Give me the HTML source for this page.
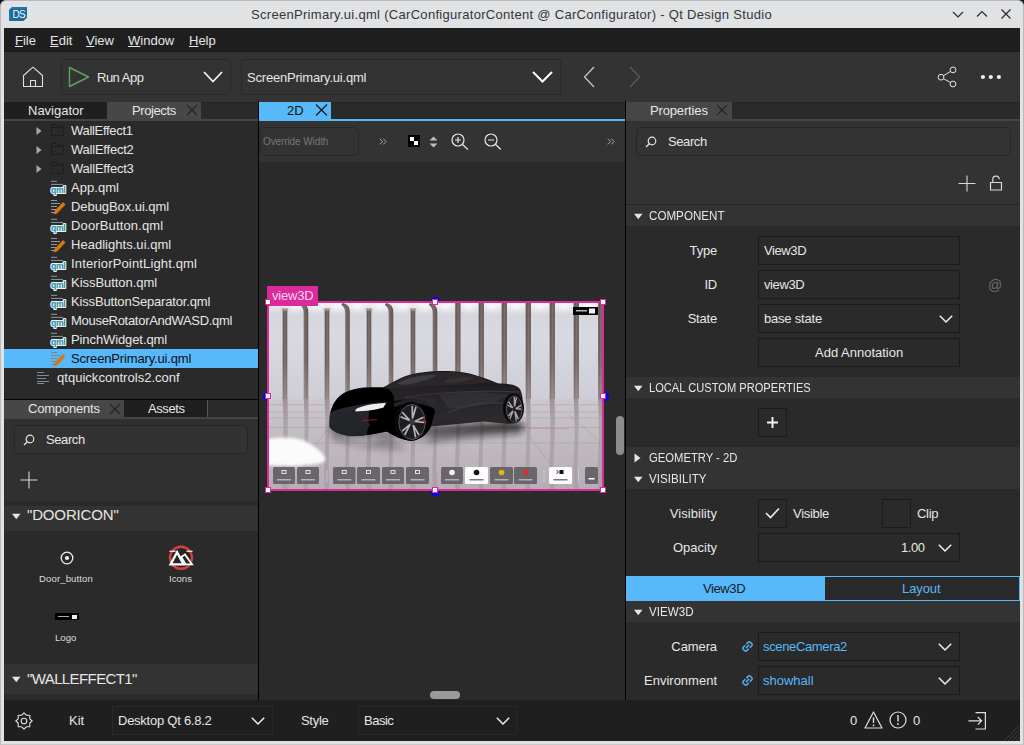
<!DOCTYPE html>
<html><head><meta charset="utf-8">
<style>
*{margin:0;padding:0;box-sizing:border-box}
html,body{width:1024px;height:745px;overflow:hidden;background:#151515}
body{position:relative;font-family:"Liberation Sans",sans-serif;font-size:13px;color:#e6e6e6}
.a{position:absolute}
.t{position:absolute;white-space:nowrap;line-height:16px;font-size:13px}
svg{position:absolute;overflow:visible}
</style></head><body>
<!-- window frame -->
<div class="a" style="left:0;top:0;width:1024px;height:745px;background:#e1e2e4;border-radius:6px 6px 0 0;border:1px solid #b9babc;border-bottom-color:#c8c9cb"></div>
<!-- DS logo -->
<svg style="left:9px;top:7px" width="18" height="14" viewBox="0 0 18 14"><path d="M3 0 H18 V10.5 L14.5 14 H0 V3 Z" fill="#1b6a9b"/><path d="M0 3 L3 0 H18 V2 H4 L2 4 V14 H0 Z" fill="#2a7db0" opacity="0.6"/><text x="3.4" y="10.6" font-family="Liberation Sans" font-size="10" fill="#f4f8fb" letter-spacing="-0.5">DS</text></svg>
<div class="t" style="left:251px;top:7px;color:#31363b;letter-spacing:0.3px">ScreenPrimary.ui.qml (CarConfiguratorContent @ CarConfigurator) - Qt Design Studio</div>
<!-- window buttons -->
<svg style="left:952px;top:11px" width="12" height="8"><path d="M1 1 L6 6 L11 1" stroke="#2a2a2a" stroke-width="1.2" fill="none"/></svg>
<svg style="left:976px;top:10px" width="12" height="8"><path d="M1 6.5 L6 1.5 L11 6.5" stroke="#2a2a2a" stroke-width="1.2" fill="none"/></svg>
<svg style="left:1001px;top:9px" width="10" height="10"><path d="M0.5 0.5 L9.5 9.5 M9.5 0.5 L0.5 9.5" stroke="#2a2a2a" stroke-width="1.2" fill="none"/></svg>

<!-- menubar -->
<div class="a" style="left:4px;top:28px;width:1016px;height:24px;background:#1f1f1f"></div>
<div class="t" style="left:15px;top:32.5px"><u>F</u>ile</div>
<div class="t" style="left:50px;top:32.5px"><u>E</u>dit</div>
<div class="t" style="left:86px;top:32.5px"><u>V</u>iew</div>
<div class="t" style="left:128px;top:32.5px"><u>W</u>indow</div>
<div class="t" style="left:189px;top:32.5px"><u>H</u>elp</div>

<!-- toolbar -->
<div class="a" style="left:4px;top:52px;width:1016px;height:50px;background:#333333"></div><div class="a" style="left:4px;top:51px;width:1016px;height:1px;background:#1a1a1a"></div>

<!-- toolbar items -->
<svg style="left:22px;top:66px" width="22" height="22" viewBox="0 0 22 22"><path d="M1.5 9.5 L11 1.2 L20.5 9.5 V20.5 H1.5 Z M8.5 20.5 V14.5 H13.5 V20.5" stroke="#e0e0e0" stroke-width="1.1" fill="none" stroke-linejoin="round"/></svg>
<div class="a" style="left:61px;top:59px;width:170px;height:36px;background:#333333;border:1px solid #292929;border-radius:5px"></div>
<svg style="left:68px;top:66px" width="22" height="22" viewBox="0 0 22 22"><path d="M1.5 1.5 L20.5 11 L1.5 20.5 Z" stroke="#5ea55a" stroke-width="1.4" fill="none" stroke-linejoin="round"/></svg>
<div class="t" style="left:97px;top:69.5px;letter-spacing:-0.5px">Run App</div>
<svg style="left:203px;top:71px" width="20" height="12" viewBox="0 0 20 12"><path d="M1 1 L10 10.5 L19 1" stroke="#f2f2f2" stroke-width="1.8" fill="none"/></svg>
<div class="a" style="left:241px;top:59px;width:320px;height:36px;background:#333333;border:1px solid #292929;border-radius:2px"></div>
<div class="t" style="left:247px;top:69.5px;letter-spacing:-0.2px">ScreenPrimary.ui.qml</div>
<svg style="left:532px;top:71px" width="21" height="12" viewBox="0 0 21 12"><path d="M1 1 L10.5 10.5 L20 1" stroke="#ffffff" stroke-width="2" fill="none"/></svg>
<svg style="left:583px;top:66px" width="12" height="22" viewBox="0 0 12 22"><path d="M11 1 L1.5 11 L11 21" stroke="#c8c8c8" stroke-width="1.3" fill="none"/></svg>
<svg style="left:629px;top:66px" width="12" height="22" viewBox="0 0 12 22"><path d="M1 1 L10.5 11 L1 21" stroke="#5a5a5a" stroke-width="1.3" fill="none"/></svg>
<svg style="left:936px;top:65px" width="22" height="24" viewBox="0 0 22 24"><circle cx="5" cy="12.2" r="2.9" stroke="#e6e6e6" stroke-width="1" fill="none"/><circle cx="17" cy="4.9" r="2.9" stroke="#e6e6e6" stroke-width="1" fill="none"/><circle cx="17" cy="19" r="2.9" stroke="#e6e6e6" stroke-width="1" fill="none"/><path d="M7.6 10.6 L14.4 6.5 M7.6 13.8 L14.4 17.4" stroke="#e6e6e6" stroke-width="1"/></svg>
<svg style="left:978px;top:72px" width="26" height="10" viewBox="0 0 26 10"><circle cx="4.9" cy="5" r="2.1" fill="#f0f0f0"/><circle cx="12.8" cy="5" r="2.1" fill="#f0f0f0"/><circle cx="20.9" cy="5" r="2.1" fill="#f0f0f0"/></svg>

<!-- left panel -->
<div class="a" style="left:4px;top:102px;width:254px;height:19px;background:#2a2a2a;border-top:1px solid #242424"></div><div class="a" style="left:4px;top:102px;width:103px;height:17px;background:#1f1f1f"></div>
<div class="a" style="left:4px;top:121px;width:254px;height:278px;background:#2a2a2a"></div>
<div class="a" style="left:4px;top:399px;width:254px;height:1px;background:#050505"></div>
<div class="a" style="left:4px;top:400px;width:254px;height:19px;background:#1f1f1f"></div>
<div class="a" style="left:4px;top:419px;width:254px;height:281px;background:#303030"></div>


<!-- left tabs -->
<div class="t" style="left:28px;top:102.5px;letter-spacing:0px">Navigator</div>
<div class="a" style="left:107px;top:102px;width:94px;height:17px;background:#474747"></div>
<div class="t" style="left:132px;top:102.5px;letter-spacing:-0.4px">Projects</div>
<svg style="left:186px;top:104px" width="12" height="12" viewBox="0 0 12 12"><path d="M1 1 L11 11 M11 1 L1 11" stroke="#252525" stroke-width="1.2"/></svg>
<div class="a" style="left:4px;top:119px;width:254px;height:2px;background:#454545"></div>
<div class="t" style="left:71px;top:122.5px;color:#e6e6e6;letter-spacing:-0.3px">WallEffect1</div>
<svg style="left:36px;top:127px" width="6" height="8" viewBox="0 0 6 8"><path d="M0.5 0 L5.5 4 L0.5 8 Z" fill="#a8a8a8"/></svg>
<svg style="left:51px;top:124px" width="13" height="12" viewBox="0 0 13 12"><path d="M0.5 0.5 H5 L6 2 H12.5 V11.5 H0.5 Z M0.5 3.5 H12.5" stroke="#1c1f22" stroke-width="1" fill="none"/></svg>
<div class="t" style="left:71px;top:141.5px;color:#e6e6e6;letter-spacing:-0.22px">WallEffect2</div>
<svg style="left:36px;top:146px" width="6" height="8" viewBox="0 0 6 8"><path d="M0.5 0 L5.5 4 L0.5 8 Z" fill="#a8a8a8"/></svg>
<svg style="left:51px;top:143px" width="13" height="12" viewBox="0 0 13 12"><path d="M0.5 0.5 H5 L6 2 H12.5 V11.5 H0.5 Z M0.5 3.5 H12.5" stroke="#1c1f22" stroke-width="1" fill="none"/></svg>
<div class="t" style="left:71px;top:160.5px;color:#e6e6e6;letter-spacing:-0.22px">WallEffect3</div>
<svg style="left:36px;top:165px" width="6" height="8" viewBox="0 0 6 8"><path d="M0.5 0 L5.5 4 L0.5 8 Z" fill="#a8a8a8"/></svg>
<svg style="left:51px;top:162px" width="13" height="12" viewBox="0 0 13 12"><path d="M0.5 0.5 H5 L6 2 H12.5 V11.5 H0.5 Z M0.5 3.5 H12.5" stroke="#1c1f22" stroke-width="1" fill="none"/></svg>
<div class="t" style="left:71px;top:179.5px;color:#e6e6e6;letter-spacing:0.04px">App.qml</div>
<svg style="left:51px;top:180px" width="15" height="16" viewBox="0 0 15 16"><path d="M0 1.3 H6 M0 4.4 H12 M0 7.4 H6" stroke="#8d9aa6" stroke-width="1"/><text x="7.2" y="13.2" font-size="8.5" font-weight="bold" text-anchor="middle" fill="#1a8aa8" stroke="#eef3f6" stroke-width="2.2" paint-order="stroke" stroke-linejoin="round" font-family="Liberation Sans" letter-spacing="-0.3">qml</text></svg>
<div class="t" style="left:71px;top:198.5px;color:#e6e6e6;letter-spacing:-0.06px">DebugBox.ui.qml</div>
<svg style="left:51px;top:199px" width="15" height="16" viewBox="0 0 15 16"><path d="M0 1.5 H6 M0 4.5 H9 M0 7.5 H6 M0 10.5 H8 M0 13.5 H6" stroke="#8d9aa6" stroke-width="1"/><path d="M2.5 15.5 L3.5 12 L12 3 L14.5 5.5 L6 14.5 Z" fill="#d9770f"/></svg>
<div class="t" style="left:71px;top:217.5px;color:#e6e6e6;letter-spacing:0.14px">DoorButton.qml</div>
<svg style="left:51px;top:218px" width="15" height="16" viewBox="0 0 15 16"><path d="M0 1.3 H6 M0 4.4 H12 M0 7.4 H6" stroke="#8d9aa6" stroke-width="1"/><text x="7.2" y="13.2" font-size="8.5" font-weight="bold" text-anchor="middle" fill="#1a8aa8" stroke="#eef3f6" stroke-width="2.2" paint-order="stroke" stroke-linejoin="round" font-family="Liberation Sans" letter-spacing="-0.3">qml</text></svg>
<div class="t" style="left:71px;top:236.5px;color:#e6e6e6;letter-spacing:0.03px">Headlights.ui.qml</div>
<svg style="left:51px;top:237px" width="15" height="16" viewBox="0 0 15 16"><path d="M0 1.5 H6 M0 4.5 H9 M0 7.5 H6 M0 10.5 H8 M0 13.5 H6" stroke="#8d9aa6" stroke-width="1"/><path d="M2.5 15.5 L3.5 12 L12 3 L14.5 5.5 L6 14.5 Z" fill="#d9770f"/></svg>
<div class="t" style="left:71px;top:255.5px;color:#e6e6e6;letter-spacing:0.15px">InteriorPointLight.qml</div>
<svg style="left:51px;top:256px" width="15" height="16" viewBox="0 0 15 16"><path d="M0 1.3 H6 M0 4.4 H12 M0 7.4 H6" stroke="#8d9aa6" stroke-width="1"/><text x="7.2" y="13.2" font-size="8.5" font-weight="bold" text-anchor="middle" fill="#1a8aa8" stroke="#eef3f6" stroke-width="2.2" paint-order="stroke" stroke-linejoin="round" font-family="Liberation Sans" letter-spacing="-0.3">qml</text></svg>
<div class="t" style="left:71px;top:274.5px;color:#e6e6e6;letter-spacing:-0.04px">KissButton.qml</div>
<svg style="left:51px;top:275px" width="15" height="16" viewBox="0 0 15 16"><path d="M0 1.3 H6 M0 4.4 H12 M0 7.4 H6" stroke="#8d9aa6" stroke-width="1"/><text x="7.2" y="13.2" font-size="8.5" font-weight="bold" text-anchor="middle" fill="#1a8aa8" stroke="#eef3f6" stroke-width="2.2" paint-order="stroke" stroke-linejoin="round" font-family="Liberation Sans" letter-spacing="-0.3">qml</text></svg>
<div class="t" style="left:71px;top:293.5px;color:#e6e6e6;letter-spacing:-0.17px">KissButtonSeparator.qml</div>
<svg style="left:51px;top:294px" width="15" height="16" viewBox="0 0 15 16"><path d="M0 1.3 H6 M0 4.4 H12 M0 7.4 H6" stroke="#8d9aa6" stroke-width="1"/><text x="7.2" y="13.2" font-size="8.5" font-weight="bold" text-anchor="middle" fill="#1a8aa8" stroke="#eef3f6" stroke-width="2.2" paint-order="stroke" stroke-linejoin="round" font-family="Liberation Sans" letter-spacing="-0.3">qml</text></svg>
<div class="t" style="left:71px;top:312.5px;color:#e6e6e6;letter-spacing:-0.29px">MouseRotatorAndWASD.qml</div>
<svg style="left:51px;top:313px" width="15" height="16" viewBox="0 0 15 16"><path d="M0 1.3 H6 M0 4.4 H12 M0 7.4 H6" stroke="#8d9aa6" stroke-width="1"/><text x="7.2" y="13.2" font-size="8.5" font-weight="bold" text-anchor="middle" fill="#1a8aa8" stroke="#eef3f6" stroke-width="2.2" paint-order="stroke" stroke-linejoin="round" font-family="Liberation Sans" letter-spacing="-0.3">qml</text></svg>
<div class="t" style="left:71px;top:331.5px;color:#e6e6e6;letter-spacing:-0.1px">PinchWidget.qml</div>
<svg style="left:51px;top:332px" width="15" height="16" viewBox="0 0 15 16"><path d="M0 1.3 H6 M0 4.4 H12 M0 7.4 H6" stroke="#8d9aa6" stroke-width="1"/><text x="7.2" y="13.2" font-size="8.5" font-weight="bold" text-anchor="middle" fill="#1a8aa8" stroke="#eef3f6" stroke-width="2.2" paint-order="stroke" stroke-linejoin="round" font-family="Liberation Sans" letter-spacing="-0.3">qml</text></svg>
<div class="a" style="left:4px;top:349px;width:254px;height:19px;background:#57b8fa"></div>
<div class="t" style="left:71px;top:350.5px;color:#0f0f0f;letter-spacing:-0.15px">ScreenPrimary.ui.qml</div>
<svg style="left:51px;top:351px" width="15" height="16" viewBox="0 0 15 16"><path d="M0 1.5 H6 M0 4.5 H9 M0 7.5 H6 M0 10.5 H8 M0 13.5 H6" stroke="#7c8893" stroke-width="1"/><path d="M2.5 15.5 L3.5 12 L12 3 L14.5 5.5 L6 14.5 Z" fill="#d9770f"/></svg>
<div class="t" style="left:57px;top:369.5px;color:#e6e6e6;letter-spacing:0.03px">qtquickcontrols2.conf</div>
<svg style="left:37px;top:371px" width="13" height="13" viewBox="0 0 13 13"><path d="M0 1.5 H7 M0 4.5 H12 M0 7.5 H9 M0 10.5 H12 M0 12.5 H7" stroke="#7f8a94" stroke-width="1"/></svg>

<!-- components panel -->
<div class="a" style="left:4px;top:400px;width:120px;height:17px;background:#474747"></div>
<div class="t" style="left:28px;top:401px;letter-spacing:-0.2px">Components</div>
<svg style="left:109px;top:403px" width="12" height="12" viewBox="0 0 12 12"><path d="M1 1 L11 11 M11 1 L1 11" stroke="#252525" stroke-width="1.2"/></svg>
<div class="t" style="left:148px;top:401px;letter-spacing:-0.4px">Assets</div>
<div class="a" style="left:207px;top:400px;width:1px;height:17px;background:#555"></div>
<div class="a" style="left:208px;top:400px;width:50px;height:17px;background:#2a2a2a"></div>
<div class="a" style="left:4px;top:417px;width:254px;height:2px;background:#454545"></div>
<div class="a" style="left:14px;top:425px;width:234px;height:29px;background:#323232;border:1px solid #262626;border-radius:5px"></div>
<svg style="left:23px;top:434px" width="12" height="12" viewBox="0 0 12 12"><circle cx="7" cy="5" r="3.8" stroke="#e6e6e6" stroke-width="1.2" fill="none"/><path d="M4.3 7.7 L1 11" stroke="#e6e6e6" stroke-width="1.3"/></svg>
<div class="t" style="left:46px;top:431.5px;letter-spacing:-0.4px">Search</div>
<svg style="left:20px;top:471px" width="18" height="18" viewBox="0 0 18 18"><path d="M9 0.5 V17.5 M0.5 9 H17.5" stroke="#d8d8d8" stroke-width="1.1"/></svg>
<div class="a" style="left:4px;top:501px;width:254px;height:5px;background:#2a2a2a"></div>
<div class="a" style="left:4px;top:506px;width:254px;height:25px;background:#333333"></div>
<svg style="left:11px;top:513px" width="10" height="7" viewBox="0 0 10 7"><path d="M1 0.8 H9.5 L5.25 6.2 Z" fill="#e6e6e6"/></svg>
<div class="t" style="left:27px;top:506px;font-size:15px;line-height:18px;letter-spacing:-0.15px">"DOORICON"</div>
<div class="a" style="left:4px;top:531px;width:254px;height:133px;background:#2a2a2a"></div>
<svg style="left:60px;top:551px" width="14" height="14" viewBox="0 0 14 14"><circle cx="7" cy="7" r="5.8" stroke="#f0f0f0" stroke-width="1.3" fill="none"/><circle cx="7" cy="7" r="2.1" fill="#f0f0f0"/></svg>
<div class="t" style="left:39px;top:573px;font-size:9.6px;line-height:12px;color:#dcdcdc;letter-spacing:0.1px">Door_button</div>
<svg style="left:168px;top:545px" width="26" height="26" viewBox="0 0 26 26"><circle cx="13" cy="12.8" r="12.2" fill="#d6403f"/><circle cx="13" cy="12.8" r="9.8" fill="#262626"/><rect x="1.5" y="5.6" width="6" height="1.4" fill="#f6dada"/><rect x="18.5" y="5.6" width="6" height="1.4" fill="#f6dada"/><path d="M2.6 19.4 L9.1 7.2 L15.6 19.4 Z" stroke="#fff" stroke-width="2.3" fill="none" stroke-linejoin="miter"/><path d="M13.2 12 L17 9.5 L24 19.4 L17.8 19.4 Z" stroke="#fff" stroke-width="1.8" fill="none"/></svg>
<div class="t" style="left:169px;top:573px;font-size:9.6px;line-height:12px;color:#dcdcdc">Icons</div>
<div class="a" style="left:55px;top:613px;width:24px;height:7px;background:#000"></div>
<div class="a" style="left:58px;top:615.5px;width:11px;height:1.5px;background:#aaa"></div>
<div class="a" style="left:72px;top:614.5px;width:5px;height:4px;background:#eee"></div>
<div class="t" style="left:55px;top:631.5px;font-size:9.6px;line-height:12px;color:#dcdcdc">Logo</div>
<div class="a" style="left:4px;top:664px;width:254px;height:30px;background:#333333"></div>
<svg style="left:11px;top:676px" width="10" height="7" viewBox="0 0 10 7"><path d="M1 0.8 H9.5 L5.25 6.2 Z" fill="#e6e6e6"/></svg>
<div class="t" style="left:27px;top:670px;font-size:15px;line-height:18px;letter-spacing:-0.6px">"WALLEFFECT1"</div>

<!-- center -->
<div class="a" style="left:258px;top:101px;width:1px;height:599px;background:#000"></div>
<div class="a" style="left:259px;top:102px;width:366px;height:19px;background:#2a2a2a;border-top:1px solid #242424"></div>
<div class="a" style="left:259px;top:121px;width:366px;height:41px;background:#333333"></div>
<div class="a" style="left:259px;top:162px;width:366px;height:538px;background:#2a2a2a"></div>


<!-- center tabs -->
<div class="a" style="left:259px;top:102px;width:72px;height:17px;background:#57b8fa"></div>
<div class="a" style="left:259px;top:119px;width:366px;height:2px;background:#57b8fa"></div>
<div class="t" style="left:287px;top:102.5px;color:#111">2D</div>
<svg style="left:315px;top:104px" width="13" height="12" viewBox="0 0 13 12"><path d="M1 0.5 L12 11.5 M12 0.5 L1 11.5" stroke="#1a1a1a" stroke-width="1.2"/></svg>
<!-- canvas toolbar -->
<div class="a" style="left:260px;top:127px;width:99px;height:29px;background:#333333;border:1px solid #282828;border-radius:5px"></div>
<div class="t" style="left:263px;top:135px;font-size:10px;line-height:14px;color:#767676;letter-spacing:-0.1px">Override Width</div>
<svg style="left:379px;top:138px" width="8" height="7" viewBox="0 0 8 7"><path d="M0.8 0.6 L3.5 3.5 L0.8 6.4 M4.3 0.6 L7 3.5 L4.3 6.4" stroke="#b0b0b0" stroke-width="0.9" fill="none"/></svg>
<div class="a" style="left:408px;top:135px;width:12px;height:12px;background:#000"></div>
<div class="a" style="left:410px;top:137px;width:4px;height:4px;background:#fff"></div>
<div class="a" style="left:414px;top:141px;width:4px;height:4px;background:#fff"></div>
<svg style="left:429px;top:136px" width="9" height="12" viewBox="0 0 9 12"><path d="M0.5 4.5 L4.5 0.5 L8.5 4.5 Z M0.5 7.5 L4.5 11.5 L8.5 7.5 Z" fill="#bdbdbd"/></svg>
<svg style="left:451px;top:133px" width="18" height="17" viewBox="0 0 18 17"><circle cx="7" cy="7" r="6" stroke="#e8e8e8" stroke-width="1.2" fill="none"/><path d="M11.3 11.3 L16.8 16.5 M7 4 V10 M4 7 H10" stroke="#e8e8e8" stroke-width="1.2"/></svg>
<svg style="left:484px;top:133px" width="18" height="17" viewBox="0 0 18 17"><circle cx="7" cy="7" r="6" stroke="#e8e8e8" stroke-width="1.2" fill="none"/><path d="M11.3 11.3 L16.8 16.5 M4 7 H10" stroke="#e8e8e8" stroke-width="1.2"/></svg>
<svg style="left:607px;top:138px" width="8" height="7" viewBox="0 0 8 7"><path d="M0.8 0.6 L3.5 3.5 L0.8 6.4 M4.3 0.6 L7 3.5 L4.3 6.4" stroke="#b0b0b0" stroke-width="0.9" fill="none"/></svg>
<!-- canvas scrollbars -->
<div class="a" style="left:616px;top:416px;width:8px;height:39px;background:#8c8c8c;border-radius:4px"></div>
<div class="a" style="left:430px;top:691px;width:30px;height:8px;background:#9a9a9a;border-radius:4px"></div>

<!-- view3d -->
<div class="a" style="left:430.5px;top:296.5px;width:9px;height:9px;border-radius:50%;background:#0000ff"></div>
<div class="a" style="left:262.5px;top:391.5px;width:9px;height:9px;border-radius:50%;background:#0000ff"></div>
<div class="a" style="left:599.5px;top:391.5px;width:9px;height:9px;border-radius:50%;background:#0000ff"></div>
<div class="a" style="left:430.5px;top:486.5px;width:9px;height:9px;border-radius:50%;background:#0000ff"></div>
<div class="a" style="left:269px;top:303px;width:333px;height:186px;overflow:hidden;background:#d8d7de">
<svg style="left:0;top:0" width="333" height="186" viewBox="0 0 333 186">
<defs>
<linearGradient id="wall" x1="0" y1="0" x2="0" y2="1"><stop offset="0" stop-color="#ececf1"/><stop offset="0.12" stop-color="#d6d6de"/><stop offset="0.35" stop-color="#dadae2"/><stop offset="0.75" stop-color="#d3d3dc"/><stop offset="1" stop-color="#cdccd6"/></linearGradient>
<linearGradient id="floor" x1="0" y1="0" x2="0" y2="1"><stop offset="0" stop-color="#cfcad0"/><stop offset="0.35" stop-color="#c3bdc4"/><stop offset="1" stop-color="#b6aeb6"/></linearGradient>
<linearGradient id="pil" x1="0" y1="0" x2="1" y2="0"><stop offset="0" stop-color="#554744"/><stop offset="0.5" stop-color="#7d6d6b"/><stop offset="1" stop-color="#5e504e"/></linearGradient>
<linearGradient id="pref" x1="0" y1="0" x2="0" y2="1"><stop offset="0" stop-color="#8a7b7e" stop-opacity="0.7"/><stop offset="0.3" stop-color="#978a92" stop-opacity="0.5"/><stop offset="1" stop-color="#9a8e97" stop-opacity="0.45"/></linearGradient>
<radialGradient id="glare" cx="0.45" cy="0.5" r="0.5"><stop offset="0" stop-color="#ffffff"/><stop offset="0.7" stop-color="#fafafc" stop-opacity="0.95"/><stop offset="1" stop-color="#ffffff" stop-opacity="0"/></radialGradient>
<linearGradient id="shadow" x1="0" y1="0" x2="0" y2="1"><stop offset="0" stop-color="#0a0809" stop-opacity="0.95"/><stop offset="1" stop-color="#2a2428" stop-opacity="0"/></linearGradient>
<linearGradient id="body" x1="0" y1="0" x2="0" y2="1"><stop offset="0" stop-color="#151415"/><stop offset="0.3" stop-color="#252326"/><stop offset="0.7" stop-color="#2c2a2d"/><stop offset="1" stop-color="#1a1819"/></linearGradient>
<linearGradient id="pfade" x1="0" y1="0" x2="0" y2="1"><stop offset="0" stop-color="#c8c6ce" stop-opacity="0"/><stop offset="0.6" stop-color="#d0ced6" stop-opacity="0.08"/><stop offset="1" stop-color="#d4d0d8" stop-opacity="0.35"/></linearGradient>
<filter id="bl" x="-20%" y="-20%" width="140%" height="140%"><feGaussianBlur stdDeviation="0.7"/></filter>
<filter id="bl1" x="-20%" y="-20%" width="140%" height="140%"><feGaussianBlur stdDeviation="0.4"/></filter>
<filter id="bl3" x="-50%" y="-50%" width="200%" height="200%"><feGaussianBlur stdDeviation="1.8"/></filter>
<filter id="bl2" x="-50%" y="-50%" width="200%" height="200%"><feGaussianBlur stdDeviation="3"/></filter>
</defs>
<rect x="0" y="0" width="333" height="96" fill="url(#wall)"/>
<g filter="url(#bl2)"><ellipse cx="26.5" cy="2" rx="7" ry="5" fill="#ffffff" opacity="0.8"/><ellipse cx="47.5" cy="2" rx="7" ry="5" fill="#ffffff" opacity="0.8"/><ellipse cx="68.2" cy="2" rx="7" ry="5" fill="#ffffff" opacity="0.8"/><ellipse cx="89.2" cy="2" rx="7" ry="5" fill="#ffffff" opacity="0.8"/><ellipse cx="111.0" cy="2" rx="7" ry="5" fill="#ffffff" opacity="0.8"/><ellipse cx="133.0" cy="2" rx="7" ry="5" fill="#ffffff" opacity="0.8"/><ellipse cx="155.0" cy="2" rx="7" ry="5" fill="#ffffff" opacity="0.8"/><ellipse cx="177.3" cy="2" rx="7" ry="5" fill="#ffffff" opacity="0.8"/><ellipse cx="200.3" cy="2" rx="7" ry="5" fill="#ffffff" opacity="0.8"/><ellipse cx="223.5" cy="2" rx="7" ry="5" fill="#ffffff" opacity="0.8"/><ellipse cx="247.0" cy="2" rx="7" ry="5" fill="#ffffff" opacity="0.8"/><ellipse cx="271.0" cy="2" rx="7" ry="5" fill="#ffffff" opacity="0.8"/><ellipse cx="295.0" cy="2" rx="7" ry="5" fill="#ffffff" opacity="0.8"/><ellipse cx="319.2" cy="2" rx="7" ry="5" fill="#ffffff" opacity="0.8"/></g>
<rect x="0" y="94" width="333" height="92" fill="url(#floor)"/>
<g filter="url(#bl)"><path d="M13.5 95 h5 q1 30 -0.5 50 q-1 20 0.5 41 h-5 q-1 -20 0.5 -41 q1 -20 -0.5 -50 Z" fill="url(#pref)"/><path d="M34.7 95 h4.6 q1 30 -0.5 50 q-1 20 0.5 41 h-4.6 q-1 -20 0.5 -41 q1 -20 -0.5 -50 Z" fill="url(#pref)"/><path d="M55.5 95 h5 q1 30 -0.5 50 q-1 20 0.5 41 h-5 q-1 -20 0.5 -41 q1 -20 -0.5 -50 Z" fill="url(#pref)"/><path d="M76.2 95 h4.6 q1 30 -0.5 50 q-1 20 0.5 41 h-4.6 q-1 -20 0.5 -41 q1 -20 -0.5 -50 Z" fill="url(#pref)"/><path d="M97.5 95 h5 q1 30 -0.5 50 q-1 20 0.5 41 h-5 q-1 -20 0.5 -41 q1 -20 -0.5 -50 Z" fill="url(#pref)"/><path d="M119.7 95 h4.6 q1 30 -0.5 50 q-1 20 0.5 41 h-4.6 q-1 -20 0.5 -41 q1 -20 -0.5 -50 Z" fill="url(#pref)"/><path d="M141.5 95 h5 q1 30 -0.5 50 q-1 20 0.5 41 h-5 q-1 -20 0.5 -41 q1 -20 -0.5 -50 Z" fill="url(#pref)"/><path d="M163.7 95 h4.6 q1 30 -0.5 50 q-1 20 0.5 41 h-4.6 q-1 -20 0.5 -41 q1 -20 -0.5 -50 Z" fill="url(#pref)"/><path d="M186.1 95 h5 q1 30 -0.5 50 q-1 20 0.5 41 h-5 q-1 -20 0.5 -41 q1 -20 -0.5 -50 Z" fill="url(#pref)"/><path d="M209.7 95 h4.6 q1 30 -0.5 50 q-1 20 0.5 41 h-4.6 q-1 -20 0.5 -41 q1 -20 -0.5 -50 Z" fill="url(#pref)"/><path d="M232.5 95 h5 q1 30 -0.5 50 q-1 20 0.5 41 h-5 q-1 -20 0.5 -41 q1 -20 -0.5 -50 Z" fill="url(#pref)"/><path d="M256.7 95 h4.6 q1 30 -0.5 50 q-1 20 0.5 41 h-4.6 q-1 -20 0.5 -41 q1 -20 -0.5 -50 Z" fill="url(#pref)"/><path d="M280.5 95 h5 q1 30 -0.5 50 q-1 20 0.5 41 h-5 q-1 -20 0.5 -41 q1 -20 -0.5 -50 Z" fill="url(#pref)"/><path d="M304.7 95 h4.6 q1 30 -0.5 50 q-1 20 0.5 41 h-4.6 q-1 -20 0.5 -41 q1 -20 -0.5 -50 Z" fill="url(#pref)"/><path d="M329.0 95 h5 q1 30 -0.5 50 q-1 20 0.5 41 h-5 q-1 -20 0.5 -41 q1 -20 -0.5 -50 Z" fill="url(#pref)"/></g>
<g filter="url(#bl)"><rect x="13.7" y="6" width="4.6" height="90" fill="url(#pil)"/><rect x="12.7" y="5" width="6.6" height="3" fill="#a9a1a3" opacity="0.7"/><path d="M32.0 0 Q39.8 1 39.3 10 V96 H34.7 V10 Q34.7 4 31.0 2 Z" fill="url(#pil)"/><rect x="55.7" y="6" width="4.6" height="90" fill="url(#pil)"/><rect x="54.7" y="5" width="6.6" height="3" fill="#a9a1a3" opacity="0.7"/><path d="M73.5 0 Q81.3 1 80.8 10 V96 H76.2 V10 Q76.2 4 72.5 2 Z" fill="url(#pil)"/><rect x="97.7" y="6" width="4.6" height="90" fill="url(#pil)"/><rect x="96.7" y="5" width="6.6" height="3" fill="#a9a1a3" opacity="0.7"/><path d="M117.0 0 Q124.8 1 124.3 10 V96 H119.7 V10 Q119.7 4 116.0 2 Z" fill="url(#pil)"/><rect x="141.7" y="6" width="4.6" height="90" fill="url(#pil)"/><rect x="140.7" y="5" width="6.6" height="3" fill="#a9a1a3" opacity="0.7"/><path d="M161.0 0 Q168.8 1 168.3 10 V96 H163.7 V10 Q163.7 4 160.0 2 Z" fill="url(#pil)"/><rect x="186.3" y="0" width="5.199999999999999" height="96" fill="url(#pil)"/><rect x="209.7" y="0" width="5.199999999999999" height="96" fill="url(#pil)"/><rect x="232.7" y="0" width="5.199999999999999" height="96" fill="url(#pil)"/><rect x="256.7" y="0" width="5.199999999999999" height="96" fill="url(#pil)"/><rect x="280.7" y="0" width="5.199999999999999" height="96" fill="url(#pil)"/><rect x="304.7" y="0" width="5.199999999999999" height="96" fill="url(#pil)"/><rect x="329.2" y="0" width="5.199999999999999" height="96" fill="url(#pil)"/></g>
<rect x="0" y="0" width="333" height="96" fill="url(#pfade)"/>
<g stroke="#a69ea6" stroke-width="0.7" opacity="0.8" filter="url(#bl1)" fill="none"><path d="M0 101.8 H333 M0 109 H333 M0 115 H333 M0 124.5 H333 M0 140 H333 M18 186 L58 126 M238 104 L300 186 M300 112 L333 140"/></g>
<path d="M212 124 L300 126" stroke="#d06a6a" stroke-width="0.8" opacity="0.5"/>
<path d="M-5 137 C10 133 28 134 36 138 C46 143 58 152 56 158 C48 163 20 164 -5 162 Z" fill="#ffffff" opacity="0.95" filter="url(#bl3)"/>
<path d="M60 124 L118 128 L162 123 L242 119 L256 121 L252 131 L160 138 L70 140 Z" fill="url(#shadow)" filter="url(#bl2)"/>
<path d="M62 128 C70 136 85 142 100 141 L118 133 C125 140 135 146 145 146 C155 146 160 140 163 128 L240 122 L246 126 C220 132 200 134 165 140 C140 150 100 150 62 136 Z" fill="#3a3438" opacity="0.35" filter="url(#bl2)"/>
<path d="M60.5 124 C59.5 112 62 102 70 94 C76 88 86 84.5 100 84.2 L114 84.6 C124 79 132 74 142 71.5 C155 68.5 175 66.5 195 69.5 C210 72 222 78 230 80.5 C240 80.5 248 82 251 86 C254 92 254.5 100 253 108 C251 115 246 120 240 121 L215 118.5 L162 123.5 C158 132 150 137.5 142 137.5 C134 137.5 125 133 118 128.5 C105 131 90 134 80 133 C70 131.5 63 128 60.5 124 Z" fill="url(#body)" filter="url(#bl1)"/>
<path d="M61.5 110 C63 101 68 94 76 89.5 C86 85 100 84 116 84.6 C122 87 126 92 125 99 C110 99 90 100 64 108 Z" fill="#040404" filter="url(#bl1)"/>
<path d="M100 108 C110 101 120 99 132 97 C150 94 162 98 166 108 L162 123.5 C158 132 150 137.5 142 137.5 C134 137.5 125 133 118 128.5 L98 132 Z" fill="#060606" filter="url(#bl1)"/>
<path d="M62 110 L95 107 L101 122 L95 133 L80 133 C70 131.5 63 128 60.5 124 Z" fill="#24252a" opacity="0.85" filter="url(#bl)"/>
<path d="M116 84.5 C126 78.5 134 74 143 72 C160 69 180 68 196 70.5 C208 72.5 216 76 222 79.5 C205 81 180 82.5 160 83 C140 84 125 85 116 85.5 Z" fill="#2a282c" filter="url(#bl1)"/>
<path d="M128 81 C135 76 145 73 160 72 L168 72 C162 76 150 80 135 82 Z" fill="#48464c" opacity="0.7" filter="url(#bl1)"/>
<path d="M175 78 C185 74 195 73 205 75 C200 78 188 80 178 80 Z" fill="#3e3336" opacity="0.8" filter="url(#bl1)"/>
<path d="M135 95 Q185 86 250 89" stroke="#444249" stroke-width="1.2" fill="none" opacity="0.7"/>
<path d="M178 110 Q205 98 234 100" stroke="#3a3d48" stroke-width="2" fill="none" opacity="0.6" filter="url(#bl1)"/>
<path d="M170 92 C190 88 215 88 240 92 C230 100 205 104 180 106 Z" fill="#3c3a40" opacity="0.5" filter="url(#bl)"/>
<path d="M125 100 C140 94 155 93 168 96 L166 106 C155 100 140 99 125 104 Z" fill="#2e2c31" opacity="0.8" filter="url(#bl)"/>
<path d="M86.5 106.5 C92 102.5 104 100.8 117 100 L114.5 104.5 C108 107 96 108 86.5 108.5 Z" fill="#eeeef2" filter="url(#bl1)"/>
<path d="M93 117.5 L108 116.5" stroke="#b02020" stroke-width="1" opacity="0.8"/>
<ellipse cx="142" cy="118.5" rx="16.5" ry="19.5" fill="#080808"/>
<ellipse cx="143" cy="119" rx="13.2" ry="17.5" fill="#1f1d20"/>
<path d="M143.5 115.6 L143.2 102.9 M143.5 115.6 L147.0 103.8 M145.6 118.5 L154.6 114.3 M145.6 118.5 L155.1 119.3 M144.2 122.1 L150.0 132.2 M144.2 122.1 L146.6 134.4 M141.1 121.4 L135.7 131.9 M141.1 121.4 L133.1 128.2 M140.7 117.4 L131.5 113.8 M140.7 117.4 L133.3 109.3 " stroke="#b6b4b8" stroke-width="1.7" fill="none" filter="url(#bl1)"/>
<ellipse cx="143" cy="119" rx="13.2" ry="17.5" fill="none" stroke="#58565a" stroke-width="1"/>
<ellipse cx="143" cy="119" rx="2.5" ry="3" fill="#3a3a3a"/>
<ellipse cx="244.5" cy="105.5" rx="10.5" ry="15" fill="#080808"/>
<ellipse cx="245.2" cy="106" rx="7.8" ry="13.2" fill="#1f1d20"/>
<path d="M245.5 103.4 L245.3 93.9 M245.5 103.4 L247.5 94.5 M246.7 105.6 L252.1 102.4 M246.7 105.6 L252.4 106.2 M245.9 108.4 L249.3 115.9 M245.9 108.4 L247.3 117.6 M244.1 107.8 L240.9 115.7 M244.1 107.8 L239.3 113.0 M243.8 104.8 L238.4 102.0 M243.8 104.8 L239.5 98.7 " stroke="#aaa8ac" stroke-width="1.4" fill="none" filter="url(#bl1)"/>
<ellipse cx="245.2" cy="106" rx="7.8" ry="13.2" fill="none" stroke="#58565a" stroke-width="0.9"/>
<path d="M154 117 L157 120" stroke="#c02020" stroke-width="1.5"/>
<rect x="304" y="4" width="25" height="8" fill="#050505"/>
<rect x="307" y="7" width="11" height="1.5" fill="#bbb"/>
<rect x="320" y="5.5" width="6" height="5" fill="#f0f0f0"/>
<rect x="4" y="164" width="22" height="17" rx="1.5" fill="#69656a"/><rect x="13.0" y="167.5" width="4" height="3" fill="none" stroke="#f0f0f0" stroke-width="0.9"/><rect x="8.0" y="176" width="14" height="1.5" fill="#f0f0f0" fill-opacity="0.55"/><rect x="28" y="164" width="22" height="17" rx="1.5" fill="#69656a"/><rect x="37.0" y="167.5" width="4" height="3" fill="none" stroke="#f0f0f0" stroke-width="0.9"/><rect x="32.0" y="176" width="14" height="1.5" fill="#f0f0f0" fill-opacity="0.55"/><rect x="64" y="164" width="22.5" height="17" rx="1.5" fill="#69656a"/><rect x="73.25" y="167.5" width="4" height="3" fill="none" stroke="#f0f0f0" stroke-width="0.9"/><rect x="68.25" y="176" width="14" height="1.5" fill="#f0f0f0" fill-opacity="0.55"/><rect x="88" y="164" width="23" height="17" rx="1.5" fill="#69656a"/><rect x="97.5" y="167.5" width="4" height="3" fill="none" stroke="#f0f0f0" stroke-width="0.9"/><rect x="92.5" y="176" width="14" height="1.5" fill="#f0f0f0" fill-opacity="0.55"/><rect x="113" y="164" width="22" height="17" rx="1.5" fill="#69656a"/><rect x="122.0" y="167.5" width="4" height="3" fill="none" stroke="#f0f0f0" stroke-width="0.9"/><rect x="117.0" y="176" width="14" height="1.5" fill="#f0f0f0" fill-opacity="0.55"/><rect x="137" y="164" width="23" height="17" rx="1.5" fill="#69656a"/><rect x="146.5" y="167.5" width="4" height="3" fill="none" stroke="#f0f0f0" stroke-width="0.9"/><rect x="141.5" y="176" width="14" height="1.5" fill="#f0f0f0" fill-opacity="0.55"/><rect x="172" y="164" width="22" height="17" rx="1.5" fill="#69656a"/><circle cx="183.0" cy="169.5" r="2.8" fill="#f4f4f4"/><rect x="176.0" y="176" width="14" height="1.5" fill="#f0f0f0" fill-opacity="0.55"/><rect x="196" y="164" width="23" height="17" rx="1.5" fill="#fdfdfd"/><circle cx="207.5" cy="169.5" r="2.8" fill="#111"/><rect x="200.5" y="176" width="14" height="1.5" fill="#111" fill-opacity="0.55"/><rect x="221" y="164" width="23" height="17" rx="1.5" fill="#69656a"/><circle cx="232.5" cy="169.5" r="2.8" fill="#e6b416"/><rect x="225.5" y="176" width="14" height="1.5" fill="#f0f0f0" fill-opacity="0.55"/><rect x="245" y="164" width="23" height="17" rx="1.5" fill="#69656a"/><circle cx="256.5" cy="169.5" r="2.8" fill="#d8302a"/><rect x="249.5" y="176" width="14" height="1.5" fill="#f0f0f0" fill-opacity="0.55"/><rect x="280" y="164" width="23" height="17" rx="1.5" fill="#fdfdfd"/><path d="M287.5 167 L289.5 169 L287.5 171" stroke="#111" stroke-width="0.9" fill="none"/><rect x="290.5" y="167" width="4" height="4" fill="#111"/><rect x="284.5" y="176" width="14" height="1.5" fill="#111" fill-opacity="0.55"/><rect x="316" y="164" width="13" height="17" rx="1.5" fill="#69656a"/><rect x="319.5" y="175" width="6" height="1.5" fill="#fff"/><rect x="57.6" y="167" width="0.8" height="12" fill="#e8e4e8" fill-opacity="0.6"/><rect x="274.6" y="167" width="0.8" height="12" fill="#e8e4e8" fill-opacity="0.6"/><rect x="309" y="167" width="0.8" height="12" fill="#e8e4e8" fill-opacity="0.6"/>
</svg></div>
<!-- selection frame -->
<div class="a" style="left:267px;top:301px;width:337px;height:190px;border:2px solid #dc2a9b"></div>
<div class="a" style="left:267px;top:286px;width:51px;height:20px;background:#dc2a9b"></div>
<div class="t" style="left:272px;top:288px;color:#f6d8ec;letter-spacing:-0.2px">view3D</div>
<div class="a" style="left:264.5px;top:299px;width:6px;height:6px;background:#fff;border:1px solid #dc2a9b"></div>
<div class="a" style="left:264.5px;top:393px;width:6px;height:6px;background:#fff;border:1px solid #dc2a9b"></div>
<div class="a" style="left:264.5px;top:487px;width:6px;height:6px;background:#fff;border:1px solid #dc2a9b"></div>
<div class="a" style="left:432px;top:299px;width:6px;height:6px;background:#fff;border:1px solid #dc2a9b"></div>
<div class="a" style="left:432px;top:487px;width:6px;height:6px;background:#fff;border:1px solid #dc2a9b"></div>
<div class="a" style="left:599.5px;top:299px;width:6px;height:6px;background:#fff;border:1px solid #dc2a9b"></div>
<div class="a" style="left:599.5px;top:393px;width:6px;height:6px;background:#fff;border:1px solid #dc2a9b"></div>
<div class="a" style="left:599.5px;top:487px;width:6px;height:6px;background:#fff;border:1px solid #dc2a9b"></div>
<!-- right -->
<div class="a" style="left:625px;top:101px;width:1px;height:599px;background:#000"></div>
<div class="a" style="left:626px;top:102px;width:394px;height:19px;background:#2a2a2a;border-top:1px solid #242424"></div>
<div class="a" style="left:626px;top:121px;width:394px;height:579px;background:#2a2a2a"></div>


<!-- properties tab -->
<div class="a" style="left:626px;top:102px;width:106px;height:17px;background:#474747"></div>
<div class="t" style="left:650px;top:102.5px;letter-spacing:-0.15px">Properties</div>
<svg style="left:716px;top:104px" width="12" height="12" viewBox="0 0 12 12"><path d="M1 1 L11 11 M11 1 L1 11" stroke="#252525" stroke-width="1.2"/></svg>
<div class="a" style="left:626px;top:119px;width:394px;height:2px;background:#454545"></div>
<div class="a" style="left:626px;top:121px;width:394px;height:83px;background:#333333"></div>
<div class="a" style="left:636px;top:127px;width:375px;height:29px;background:#333333;border:1px solid #282828;border-radius:5px"></div>
<svg style="left:645px;top:136px" width="12" height="12" viewBox="0 0 12 12"><circle cx="7" cy="5" r="3.8" stroke="#e6e6e6" stroke-width="1.2" fill="none"/><path d="M4.3 7.7 L1 11" stroke="#e6e6e6" stroke-width="1.3"/></svg>
<div class="t" style="left:668px;top:133.5px;letter-spacing:-0.4px">Search</div>
<svg style="left:958px;top:175px" width="18" height="17" viewBox="0 0 18 17"><path d="M9 0.5 V16.5 M0.5 8.5 H17.5" stroke="#d8d8d8" stroke-width="1.1"/></svg>
<svg style="left:989px;top:175px" width="14" height="16" viewBox="0 0 14 16"><path d="M1.5 7.5 H12.5 V15 H1.5 Z M3.8 7.5 V4.5 A3.2 3.2 0 0 1 10.2 4.2" stroke="#d8d8d8" stroke-width="1.2" fill="none"/></svg>
<div class="a" style="left:626px;top:204px;width:394px;height:1px;background:#262626"></div>
<div class="a" style="left:626px;top:205px;width:394px;height:21px;background:#333333"></div>
<svg style="left:633px;top:212.5px" width="10" height="7" viewBox="0 0 10 7"><path d="M1 0.8 H9.5 L5.25 6.2 Z" fill="#e6e6e6"/></svg>
<div class="t" style="left:649px;top:208.0px;font-size:12.5px;transform:scaleX(0.93);transform-origin:0 0">COMPONENT</div>
<div class="t" style="left:517px;width:200px;text-align:right;top:242.5px;letter-spacing:-0.2px">Type</div>
<div class="a" style="left:758px;top:236px;width:202px;height:29px;background:#2a2a2a;border:1px solid #1b1b1b"></div>
<div class="t" style="left:764px;top:242.5px;letter-spacing:-0.4px">View3D</div>
<div class="t" style="left:517px;width:200px;text-align:right;top:276.5px;letter-spacing:-0.2px">ID</div>
<div class="a" style="left:758px;top:270px;width:202px;height:29px;background:#2a2a2a;border:1px solid #1b1b1b"></div>
<div class="t" style="left:764px;top:276.5px;letter-spacing:-0.4px">view3D</div>
<div class="t" style="left:988px;top:277px;font-size:14px;color:#6c6c6c">@</div>
<div class="t" style="left:517px;width:200px;text-align:right;top:310.5px;letter-spacing:-0.2px">State</div>
<div class="a" style="left:758px;top:304px;width:202px;height:29px;background:#2a2a2a;border:1px solid #1b1b1b"></div>
<div class="t" style="left:764px;top:310.5px;letter-spacing:-0.2px">base state</div>
<svg style="left:939px;top:315px" width="14" height="8" viewBox="0 0 14 8"><path d="M0.8 0.8 L7 7 L13.2 0.8" stroke="#f0f0f0" stroke-width="1.5" fill="none"/></svg>
<div class="a" style="left:758px;top:338px;width:202px;height:29px;background:#2a2a2a;border:1px solid #1b1b1b"></div>
<div class="t" style="left:815px;top:344.5px;letter-spacing:0px">Add Annotation</div>
<div class="a" style="left:626px;top:377px;width:394px;height:21px;background:#333333"></div>
<svg style="left:633px;top:384.5px" width="10" height="7" viewBox="0 0 10 7"><path d="M1 0.8 H9.5 L5.25 6.2 Z" fill="#e6e6e6"/></svg>
<div class="t" style="left:649px;top:380.0px;font-size:12.5px;transform:scaleX(0.89);transform-origin:0 0">LOCAL CUSTOM PROPERTIES</div>
<div class="a" style="left:758px;top:408px;width:29px;height:29px;background:#2a2a2a;border:1px solid #1b1b1b"></div>
<svg style="left:767px;top:417px" width="11" height="11" viewBox="0 0 11 11"><path d="M5.5 0 V11 M0 5.5 H11" stroke="#f4f4f4" stroke-width="1.9"/></svg>
<div class="a" style="left:626px;top:447px;width:394px;height:21px;background:#333333"></div>
<svg style="left:634px;top:453.0px" width="7" height="10" viewBox="0 0 7 10"><path d="M0.5 0.5 V9.5 L6.5 5 Z" fill="#e6e6e6"/></svg>
<div class="t" style="left:649px;top:450.0px;font-size:12.5px;transform:scaleX(0.9);transform-origin:0 0">GEOMETRY - 2D</div>
<div class="a" style="left:626px;top:468px;width:394px;height:21px;background:#333333"></div>
<svg style="left:633px;top:475.5px" width="10" height="7" viewBox="0 0 10 7"><path d="M1 0.8 H9.5 L5.25 6.2 Z" fill="#e6e6e6"/></svg>
<div class="t" style="left:649px;top:471.0px;font-size:12.5px;transform:scaleX(0.93);transform-origin:0 0">VISIBILITY</div>
<div class="t" style="left:517px;width:200px;text-align:right;top:505.5px;letter-spacing:0.05px">Visibility</div>
<div class="a" style="left:758px;top:499px;width:29px;height:29px;background:#2a2a2a;border:1px solid #1b1b1b"></div>
<svg style="left:765px;top:507px" width="15" height="12" viewBox="0 0 15 12"><path d="M1 6 L5.5 10.5 L14 1.5" stroke="#f0f0f0" stroke-width="1.6" fill="none"/></svg>
<div class="t" style="left:793px;top:505.5px;letter-spacing:-0.3px">Visible</div>
<div class="a" style="left:882px;top:499px;width:29px;height:29px;background:#2a2a2a;border:1px solid #1b1b1b"></div>
<div class="t" style="left:917px;top:505.5px;letter-spacing:-0.3px">Clip</div>
<div class="t" style="left:517px;width:200px;text-align:right;top:539.5px;letter-spacing:0px">Opacity</div>
<div class="a" style="left:758px;top:533px;width:202px;height:29px;background:#2a2a2a;border:1px solid #1b1b1b"></div>
<div class="t" style="left:901px;top:539.5px;letter-spacing:-0.4px">1.00</div>
<svg style="left:938px;top:544px" width="14" height="8" viewBox="0 0 14 8"><path d="M0.8 0.8 L7 7 L13.2 0.8" stroke="#f0f0f0" stroke-width="1.5" fill="none"/></svg>
<div class="a" style="left:626px;top:576px;width:198px;height:25px;background:#57b8fa"></div>
<div class="a" style="left:824px;top:576px;width:196px;height:25px;border:1px solid #57b8fa;background:#2a2a2a"></div>
<div class="t" style="left:703px;top:580.5px;color:#1a1a1a;letter-spacing:-0.4px">View3D</div>
<div class="t" style="left:902px;top:580.5px;color:#57b8fa;letter-spacing:-0.1px">Layout</div>
<div class="a" style="left:626px;top:601px;width:394px;height:21px;background:#333333"></div>
<svg style="left:633px;top:608.5px" width="10" height="7" viewBox="0 0 10 7"><path d="M1 0.8 H9.5 L5.25 6.2 Z" fill="#e6e6e6"/></svg>
<div class="t" style="left:649px;top:604.0px;font-size:12.5px;transform:scaleX(0.93);transform-origin:0 0">VIEW3D</div>
<div class="t" style="left:517px;width:200px;text-align:right;top:638.5px;letter-spacing:-0.1px">Camera</div>
<svg style="left:742px;top:641px" width="11" height="11" viewBox="0 0 11 11"><path d="M4.2 3.2 L6.2 1.2 Q7.2 0.2 8.2 1.2 L9.8 2.8 Q10.8 3.8 9.8 4.8 L7.8 6.8 M6.8 7.8 L4.8 9.8 Q3.8 10.8 2.8 9.8 L1.2 8.2 Q0.2 7.2 1.2 6.2 L3.2 4.2 M3.8 7.2 L7.2 3.8" stroke="#57b8fa" stroke-width="1.4" fill="none"/></svg>
<div class="a" style="left:758px;top:632px;width:202px;height:29px;background:#2a2a2a;border:1px solid #1b1b1b"></div>
<div class="t" style="left:763px;top:638.5px;color:#57b8fa;letter-spacing:-0.35px">sceneCamera2</div>
<svg style="left:938px;top:643px" width="14" height="8" viewBox="0 0 14 8"><path d="M0.8 0.8 L7 7 L13.2 0.8" stroke="#f0f0f0" stroke-width="1.5" fill="none"/></svg>
<div class="t" style="left:517px;width:200px;text-align:right;top:672.5px;letter-spacing:0px">Environment</div>
<svg style="left:742px;top:675px" width="11" height="11" viewBox="0 0 11 11"><path d="M4.2 3.2 L6.2 1.2 Q7.2 0.2 8.2 1.2 L9.8 2.8 Q10.8 3.8 9.8 4.8 L7.8 6.8 M6.8 7.8 L4.8 9.8 Q3.8 10.8 2.8 9.8 L1.2 8.2 Q0.2 7.2 1.2 6.2 L3.2 4.2 M3.8 7.2 L7.2 3.8" stroke="#57b8fa" stroke-width="1.4" fill="none"/></svg>
<div class="a" style="left:758px;top:666px;width:202px;height:29px;background:#2a2a2a;border:1px solid #1b1b1b"></div>
<div class="t" style="left:763px;top:672.5px;color:#57b8fa;letter-spacing:0px">showhall</div>
<svg style="left:938px;top:677px" width="14" height="8" viewBox="0 0 14 8"><path d="M0.8 0.8 L7 7 L13.2 0.8" stroke="#f0f0f0" stroke-width="1.5" fill="none"/></svg>
<!-- status bar -->
<div class="a" style="left:4px;top:700px;width:1016px;height:41px;background:#1f1f1f"></div>

<!-- status -->
<div class="a" style="left:4px;top:694px;width:254px;height:6px;background:#2a2a2a"></div>
<svg style="left:15px;top:712px" width="18" height="18" viewBox="0 0 18 18"><path d="M9 0.8 L11.2 3.2 L14.8 3.2 L14.8 6.8 L17.2 9 L14.8 11.2 L14.8 14.8 L11.2 14.8 L9 17.2 L6.8 14.8 L3.2 14.8 L3.2 11.2 L0.8 9 L3.2 6.8 L3.2 3.2 L6.8 3.2 Z" stroke="#e0e0e0" stroke-width="1.1" fill="none" stroke-linejoin="round"/><circle cx="9" cy="9" r="2.8" stroke="#e0e0e0" stroke-width="1.1" fill="none"/></svg>
<div class="t" style="left:69px;top:713px">Kit</div>
<div class="a" style="left:112px;top:706px;width:161px;height:29px;background:#1f1f1f;border:1px solid #292929"></div>
<div class="t" style="left:118px;top:713px;letter-spacing:-0.25px">Desktop Qt 6.8.2</div>
<svg style="left:251px;top:717px" width="14" height="8" viewBox="0 0 14 8"><path d="M0.8 0.8 L7 7 L13.2 0.8" stroke="#f0f0f0" stroke-width="1.5" fill="none"/></svg>

<div class="t" style="left:301px;top:713px;letter-spacing:-0.3px">Style</div>
<div class="a" style="left:358px;top:706px;width:159px;height:29px;background:#1f1f1f;border:1px solid #292929"></div>
<div class="t" style="left:364px;top:713px;letter-spacing:-0.5px">Basic</div>
<svg style="left:496px;top:717px" width="14" height="8" viewBox="0 0 14 8"><path d="M0.8 0.8 L7 7 L13.2 0.8" stroke="#f0f0f0" stroke-width="1.5" fill="none"/></svg>

<div class="t" style="left:850px;top:713px">0</div>
<svg style="left:864px;top:711px" width="19" height="18" viewBox="0 0 19 18"><path d="M9.5 1 L18 17 H1 Z" stroke="#e0e0e0" stroke-width="1.2" fill="none" stroke-linejoin="round"/><path d="M9.5 6.5 V12" stroke="#e0e0e0" stroke-width="1.4"/><circle cx="9.5" cy="14.3" r="0.9" fill="#e0e0e0"/></svg>
<svg style="left:889px;top:711px" width="18" height="18" viewBox="0 0 18 18"><circle cx="9" cy="9" r="8" stroke="#e0e0e0" stroke-width="1.2" fill="none"/><path d="M9 4 V10.5" stroke="#e0e0e0" stroke-width="1.4"/><circle cx="9" cy="13" r="0.9" fill="#e0e0e0"/></svg>
<div class="t" style="left:913px;top:713px">0</div>
<svg style="left:968px;top:712px" width="19" height="18" viewBox="0 0 19 18"><path d="M0.5 8.8 H13.5 M9.8 5 L13.6 8.8 L9.8 12.6 M7.5 0.6 H17.4 V17 H7.5" stroke="#e0e0e0" stroke-width="1.2" fill="none"/></svg>
<svg style="left:1004px;top:725px" width="16" height="16" viewBox="0 0 16 16"><path d="M16 0 L0 16 M16 4 L4 16 M16 8 L8 16 M16 12 L12 16" stroke="#3c3c3c" stroke-width="0.9"/></svg>

</body></html>
